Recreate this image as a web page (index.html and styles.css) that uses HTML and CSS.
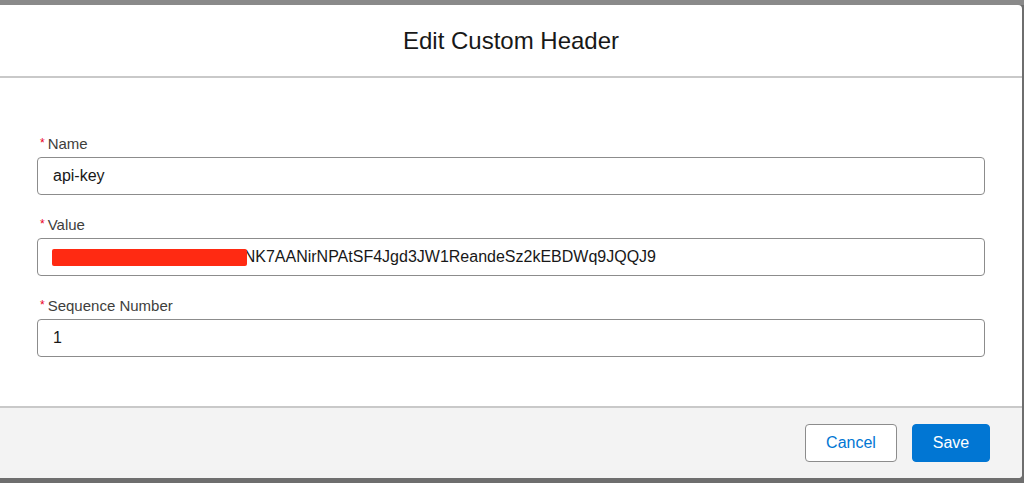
FILE: index.html
```html
<!DOCTYPE html>
<html>
<head>
<meta charset="utf-8">
<link rel="stylesheet" href="styles.css">
</head>
<body>
<div class="backdrop-top"></div>
<div class="modal">
  <header class="modal-header">
    <h2 class="modal-title">Edit Custom Header</h2>
  </header>
  <section class="modal-body">
    <div class="field">
      <label class="label"><abbr class="req">*</abbr>Name</label>
      <div class="input">api-key</div>
    </div>
    <div class="field">
      <label class="label"><abbr class="req">*</abbr>Value</label>
      <div class="input"><span class="redact"><span class="redact-text">xxxxxxxxxxxxxxxxxxxxx</span></span><span class="value-text">ANK7AANirNPAtSF4Jgd3JW1ReandeSz2kEBDWq9JQQJ9</span></div>
    </div>
    <div class="field">
      <label class="label"><abbr class="req">*</abbr>Sequence Number</label>
      <div class="input">1</div>
    </div>
  </section>
  <footer class="modal-footer">
    <button class="btn btn-neutral">Cancel</button>
    <button class="btn btn-brand">Save</button>
  </footer>
</div>
</body>
</html>
```

FILE: styles.css
```css
* { box-sizing: border-box; }
html, body {
  margin: 0;
  padding: 0;
  width: 1024px;
  height: 483px;
  overflow: hidden;
  background: #6e6e6e;
  font-family: "Liberation Sans", Arial, sans-serif;
}
.backdrop-top {
  height: 5px;
  background: #8a8a8a;
}
.modal {
  width: 1022px;
  background: #fff;
  border-radius: 0 4px 4px 0;
  overflow: hidden;
}
.modal-header {
  height: 73px;
  border-bottom: 2px solid #c9c9c9;
  display: flex;
  align-items: center;
  justify-content: center;
}
.modal-title {
  margin: 0;
  font-weight: 400;
  font-size: 24px;
  color: #181818;
}
.modal-body {
  height: 328px;
  padding: 57px 37px 0 37px;
  display: flex;
  flex-direction: column;
  gap: 21px;
}
.field {
  width: 948px;
  display: flex;
  flex-direction: column;
  gap: 4px;
}
.label {
  font-size: 15px;
  line-height: 18px;
  color: #3e3e3c;
  display: flex;
  align-items: center;
}
.req {
  color: #ea001e;
  text-decoration: none;
  font-size: 12px;
  line-height: 12px;
  margin: 0 3px 0 3px;
  position: relative;
  top: -1px;
}
.input {
  height: 38px;
  border: 1px solid #8c8c8c;
  border-radius: 4px;
  padding: 0 15px;
  display: flex;
  align-items: center;
  font-size: 16px;
  color: #181818;
  white-space: nowrap;
}
.redact {
  display: inline-block;
  width: 195px;
  height: 17px;
  margin-right: -14px;
  margin-left: -1px;
  background: #ff2a12;
  border-radius: 2px;
  position: relative;
  z-index: 1;
  overflow: hidden;
}
.redact-text {
  visibility: hidden;
}
.value-text {
  position: relative;
}
.modal-footer {
  height: 72px;
  border-top: 2px solid #c9c9c9;
  background: #f3f3f3;
  display: flex;
  align-items: center;
  justify-content: flex-end;
  padding: 0 32px 0 0;
  gap: 15px;
}
.btn {
  height: 38px;
  border-radius: 4px;
  font-family: "Liberation Sans", Arial, sans-serif;
  font-size: 16px;
  padding: 0;
  cursor: pointer;
}
.btn-neutral {
  width: 92px;
  background: #fff;
  border: 1px solid #8c8c8c;
  color: #0176d3;
}
.btn-brand {
  width: 78px;
  background: #0176d3;
  border: 1px solid #0176d3;
  color: #fff;
}
```
